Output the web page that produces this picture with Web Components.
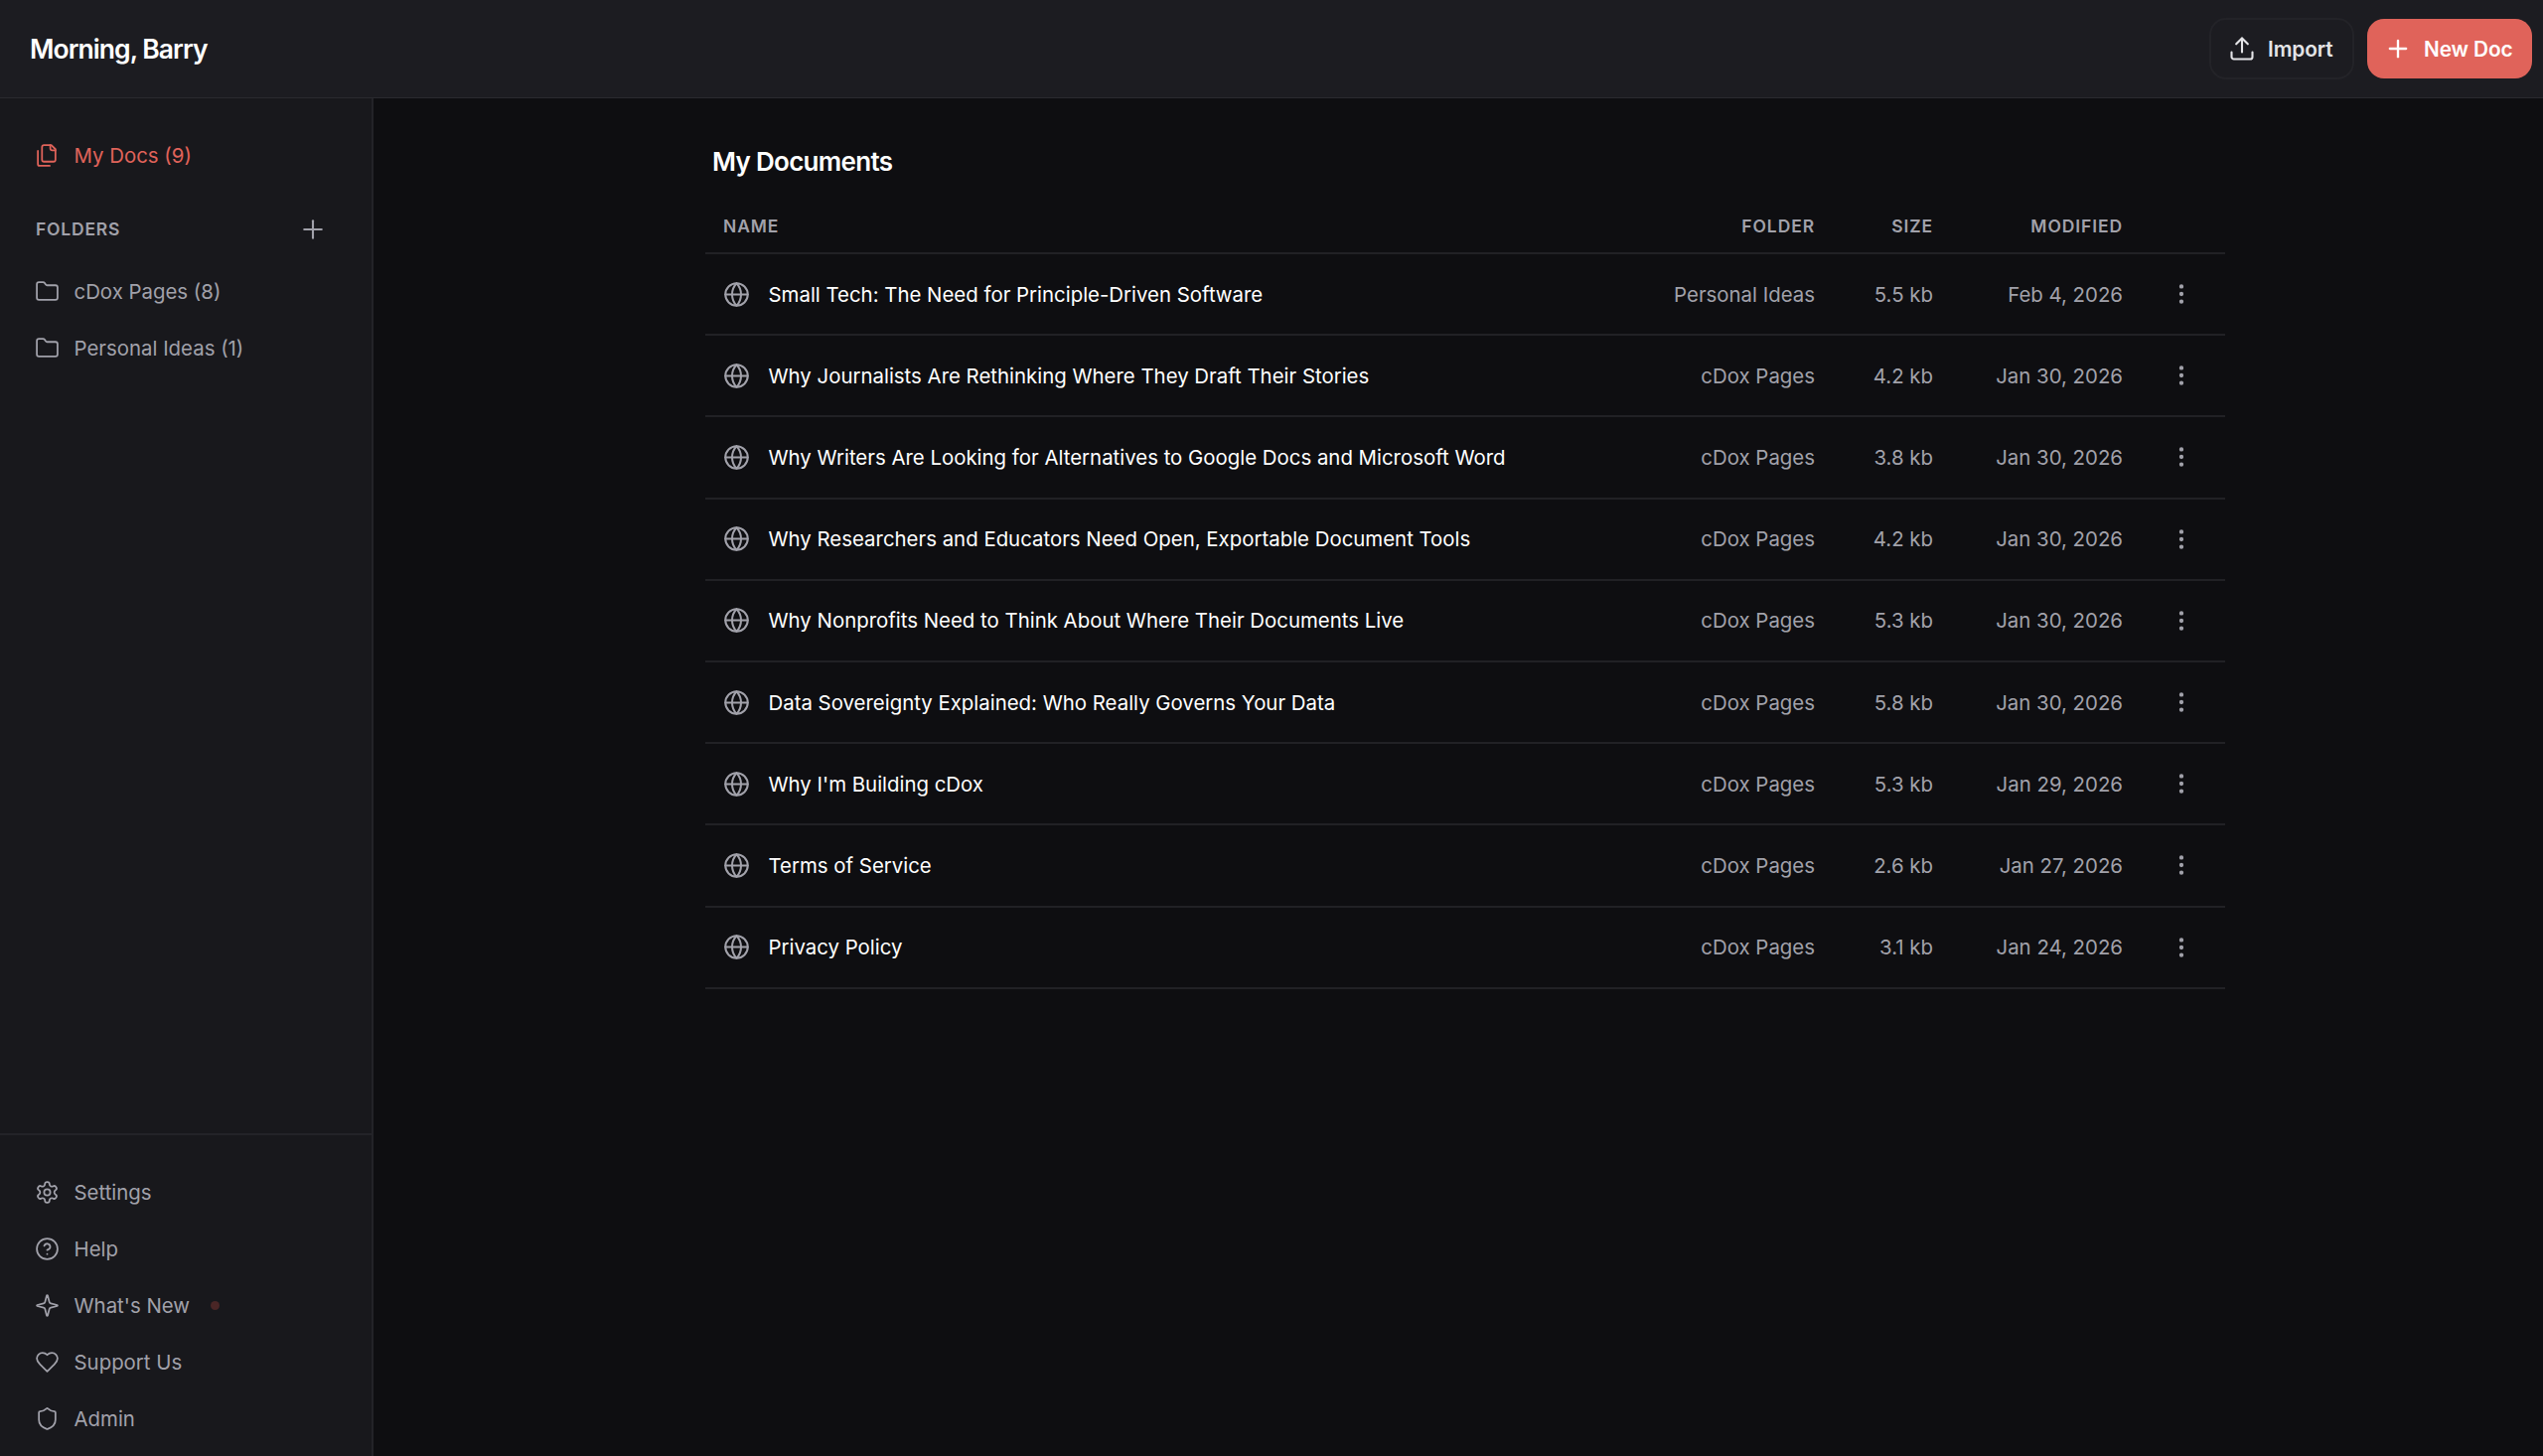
<!DOCTYPE html>
<html lang="en"><head><meta charset="utf-8"><title>cDox</title>
<style>
html,body{margin:0;height:100%;background:#0e0e11;}
body{font-family:Inter,"Liberation Sans",sans-serif;color:#fff;overflow:hidden;}
</style></head><body>
<app-shell>
  <app-header slot="header" greeting="Morning, Barry"></app-header>
  <side-bar slot="side">
    <nav-item icon="files" active style="margin:-1px 0 22px">My Docs (9)</nav-item>
    <folders-head></folders-head>
    <nav-item icon="folder">cDox Pages (8)</nav-item>
    <nav-item icon="folder">Personal Ideas (1)</nav-item>
    <nav-item slot="foot" icon="settings">Settings</nav-item>
    <nav-item slot="foot" icon="help">Help</nav-item>
    <nav-item slot="foot" icon="sparkle" dot>What's New</nav-item>
    <nav-item slot="foot" icon="heart">Support Us</nav-item>
    <nav-item slot="foot" icon="shield">Admin</nav-item>
  </side-bar>
  <doc-list slot="main" heading="My Documents">
    <doc-row name="Small Tech: The Need for Principle-Driven Software" folder="Personal Ideas" size="5.5 kb" modified="Feb 4, 2026"></doc-row>
    <doc-row name="Why Journalists Are Rethinking Where They Draft Their Stories" folder="cDox Pages" size="4.2 kb" modified="Jan 30, 2026"></doc-row>
    <doc-row name="Why Writers Are Looking for Alternatives to Google Docs and Microsoft Word" folder="cDox Pages" size="3.8 kb" modified="Jan 30, 2026"></doc-row>
    <doc-row name="Why Researchers and Educators Need Open, Exportable Document Tools" folder="cDox Pages" size="4.2 kb" modified="Jan 30, 2026"></doc-row>
    <doc-row name="Why Nonprofits Need to Think About Where Their Documents Live" folder="cDox Pages" size="5.3 kb" modified="Jan 30, 2026"></doc-row>
    <doc-row name="Data Sovereignty Explained: Who Really Governs Your Data" folder="cDox Pages" size="5.8 kb" modified="Jan 30, 2026"></doc-row>
    <doc-row name="Why I'm Building cDox" folder="cDox Pages" size="5.3 kb" modified="Jan 29, 2026"></doc-row>
    <doc-row name="Terms of Service" folder="cDox Pages" size="2.6 kb" modified="Jan 27, 2026"></doc-row>
    <doc-row name="Privacy Policy" folder="cDox Pages" size="3.1 kb" modified="Jan 24, 2026"></doc-row>
  </doc-list>
</app-shell>
<script>
const ICONS={
files:'<path d="M20 7h-3a2 2 0 0 1-2-2V2"/><path d="M9 18a2 2 0 0 1-2-2V4a2 2 0 0 1 2-2h7l4 4v10a2 2 0 0 1-2 2Z"/><path d="M3 7.6v12.8A1.6 1.6 0 0 0 4.6 22h9.8"/>',
folder:'<path d="M20 20a2 2 0 0 0 2-2V8a2 2 0 0 0-2-2h-7.9a2 2 0 0 1-1.69-.9L9.6 3.9A2 2 0 0 0 7.93 3H4a2 2 0 0 0-2 2v13a2 2 0 0 0 2 2Z"/>',
settings:'<path d="M12.22 2h-.44a2 2 0 0 0-2 2v.18a2 2 0 0 1-1 1.73l-.43.25a2 2 0 0 1-2 0l-.15-.08a2 2 0 0 0-2.73.73l-.22.38a2 2 0 0 0 .73 2.73l.15.1a2 2 0 0 1 1 1.72v.51a2 2 0 0 1-1 1.74l-.15.09a2 2 0 0 0-.73 2.73l.22.38a2 2 0 0 0 2.73.73l.15-.08a2 2 0 0 1 2 0l.43.25a2 2 0 0 1 1 1.73V20a2 2 0 0 0 2 2h.44a2 2 0 0 0 2-2v-.18a2 2 0 0 1 1-1.73l.43-.25a2 2 0 0 1 2 0l.15.08a2 2 0 0 0 2.73-.73l.22-.39a2 2 0 0 0-.73-2.73l-.15-.08a2 2 0 0 1-1-1.74v-.5a2 2 0 0 1 1-1.74l.15-.09a2 2 0 0 0 .73-2.73l-.22-.38a2 2 0 0 0-2.73-.73l-.15.08a2 2 0 0 1-2 0l-.43-.25a2 2 0 0 1-1-1.73V4a2 2 0 0 0-2-2z"/><circle cx="12" cy="12" r="3"/>',
help:'<circle cx="12" cy="12" r="10"/><path d="M9.09 9a3 3 0 0 1 5.83 1c0 2-3 3-3 3"/><path d="M12 17h.01"/>',
sparkle:'<path d="M9.937 15.5A2 2 0 0 0 8.5 14.063l-6.135-1.582a.5.5 0 0 1 0-.962L8.5 9.936A2 2 0 0 0 9.937 8.5l1.582-6.135a.5.5 0 0 1 .963 0L14.063 8.5A2 2 0 0 0 15.5 9.937l6.135 1.581a.5.5 0 0 1 0 .964L15.5 14.063a2 2 0 0 0-1.437 1.437l-1.582 6.135a.5.5 0 0 1-.963 0z"/>',
heart:'<path d="M19 14c1.49-1.46 3-3.21 3-5.5A5.5 5.5 0 0 0 16.5 3c-1.76 0-3 .5-4.5 2-1.5-1.5-2.74-2-4.5-2A5.5 5.5 0 0 0 2 8.5c0 2.3 1.5 4.05 3 5.5l7 7Z"/>',
shield:'<path d="M20 13c0 5-3.5 7.5-7.66 8.95a1 1 0 0 1-.67-.01C7.5 20.5 4 18 4 13V6a1 1 0 0 1 1-1c2 0 4.5-1.2 6.24-2.72a1.17 1.17 0 0 1 1.52 0C14.51 3.81 17 5 19 5a1 1 0 0 1 1 1z"/>',
upload:'<path d="M21 15v4a2 2 0 0 1-2 2H5a2 2 0 0 1-2-2v-4"/><polyline points="17 8 12 3 7 8"/><line x1="12" y1="3" x2="12" y2="15"/>',
plus:'<path d="M5 12h14"/><path d="M12 5v14"/>',
globe:'<circle cx="12" cy="12" r="10"/><path d="M12 2a14.5 14.5 0 0 0 0 20 14.5 14.5 0 0 0 0-20"/><path d="M2 12h20"/>',
more:'<circle cx="12" cy="12" r="1"/><circle cx="12" cy="5" r="1"/><circle cx="12" cy="19" r="1"/>'
};
const svg=(n,s,w=2)=>`<svg xmlns="http://www.w3.org/2000/svg" width="${s}" height="${s}" viewBox="0 0 24 24" fill="none" stroke="currentColor" stroke-width="${w}" stroke-linecap="round" stroke-linejoin="round" style="display:block;flex:none">${ICONS[n]}</svg>`;
class Base extends HTMLElement{
  render(html){this.attachShadow({mode:'open'}).innerHTML=html;}
}
customElements.define('app-shell',class extends Base{connectedCallback(){this.render(`<style>
:host{display:grid;grid-template-columns:376px 1fr;grid-template-rows:99px 1fr;height:100vh;background:#0e0e11}
.h{grid-column:1/3}
</style><div class="h"><slot name="header"></slot></div><slot name="side"></slot><slot name="main"></slot>`)}});
customElements.define('app-header',class extends Base{connectedCallback(){this.render(`<style>
:host{display:flex;align-items:center;justify-content:space-between;box-sizing:border-box;height:99px;padding:0 11px 0 30px;background:#1c1c21;border-bottom:1px solid #2a2a2f}
h1{margin:0;font-size:26.5px;font-weight:600;letter-spacing:-.95px;color:#fff}
.acts{display:flex;gap:13px;align-items:center}
button{font:inherit;font-size:20.8px;font-weight:600;display:flex;align-items:center;height:60px;box-sizing:border-box;border-radius:17px;cursor:pointer;white-space:nowrap;letter-spacing:-.1px}
.imp{background:transparent;border:2px solid #232328;color:#e4e4e7;padding:0 0 0 17px;width:146px;height:62px;gap:12px}
.new{background:#e0635a;border:0;color:#fff;padding:0 0 0 17px;width:166px;gap:12px}
</style><h1>${this.getAttribute('greeting')}</h1><div class="acts"><button class="imp">${svg('upload',28,1.8)}Import</button><button class="new">${svg('plus',28,2)}New Doc</button></div>`)}});
customElements.define('side-bar',class extends Base{connectedCallback(){this.render(`<style>
:host{display:flex;flex-direction:column;justify-content:space-between;background:#18181c;border-right:2px solid #232328;box-sizing:border-box;width:376px;height:1367px}
.top{display:flex;flex-direction:column;padding:30px 0 0}
.foot{display:flex;flex-direction:column;border-top:2px solid #232328;padding:29px 0 0;height:325px;box-sizing:border-box}
</style><div class="top"><slot></slot></div><div class="foot"><slot name="foot"></slot></div>`)}});
customElements.define('nav-item',class extends Base{connectedCallback(){const a=this.hasAttribute('active');this.render(`<style>
:host{display:flex;flex:none;align-items:center;gap:14.5px;height:57px;padding-left:35px;font-size:20.4px;color:${a?'#e0635a':'#a1a1aa'}}
.d{width:9px;height:9px;border-radius:50%;background:#4a2626;margin-left:7px}
</style>${svg(this.getAttribute('icon'),25,1.7)}<span><slot></slot></span>${this.hasAttribute('dot')?'<i class="d"></i>':''}`)}});
customElements.define('folders-head',class extends Base{connectedCallback(){this.render(`<style>
:host{display:flex;align-items:center;justify-content:space-between;height:47px;padding:0 44px 0 36px;margin-bottom:11px;font-size:17.5px;font-weight:600;letter-spacing:.8px;color:#a1a1aa}
</style><span>FOLDERS</span>${svg('plus',30,1.7)}`)}});
const COLS='1fr 200px 119px 191px 103px';
customElements.define('doc-list',class extends Base{connectedCallback(){this.render(`<style>
:host{display:block;padding:0 320px 0 334px;min-width:0}
h2{margin:0;padding:47px 0 0 7px;line-height:34px;font-size:26px;font-weight:600;letter-spacing:-.7px;color:#fff;height:35px}
.hd{display:grid;grid-template-columns:${COLS};align-items:center;margin-top:11px;box-sizing:border-box;padding-bottom:1px;height:64px;border-bottom:2px solid #212125;font-size:17.5px;font-weight:600;letter-spacing:.9px;color:#a1a1aa;padding-top:10px}
.hd span{text-align:right}.hd span:first-child{text-align:left;padding-left:18px}
</style><h2>${this.getAttribute('heading')}</h2>
<div class="hd"><span>NAME</span><span>FOLDER</span><span>SIZE</span><span>MODIFIED</span><span></span></div><slot></slot>`)}});
customElements.define('doc-row',class extends Base{connectedCallback(){const g=n=>this.getAttribute(n);this.render(`<style>
:host{display:grid;grid-template-columns:${COLS};align-items:center;height:82.2px;box-sizing:border-box;border-bottom:2px solid #212125;font-size:20.4px;color:#a1a1aa}
.n{display:flex;align-items:center;gap:18.5px;padding-left:18px;color:#fff;white-space:nowrap}
.i{color:#a1a1aa}
.r{text-align:right;white-space:nowrap}
.m{display:flex;justify-content:flex-end;padding-right:31px;color:#a1a1aa}
</style><div class="n"><span class="i">${svg('globe',27,1.8)}</span>${g('name')}</div><div class="r">${g('folder')}</div><div class="r">${g('size')}</div><div class="r">${g('modified')}</div><div class="m">${svg('more',26,2)}</div>`)}});
</script>
</body></html>
